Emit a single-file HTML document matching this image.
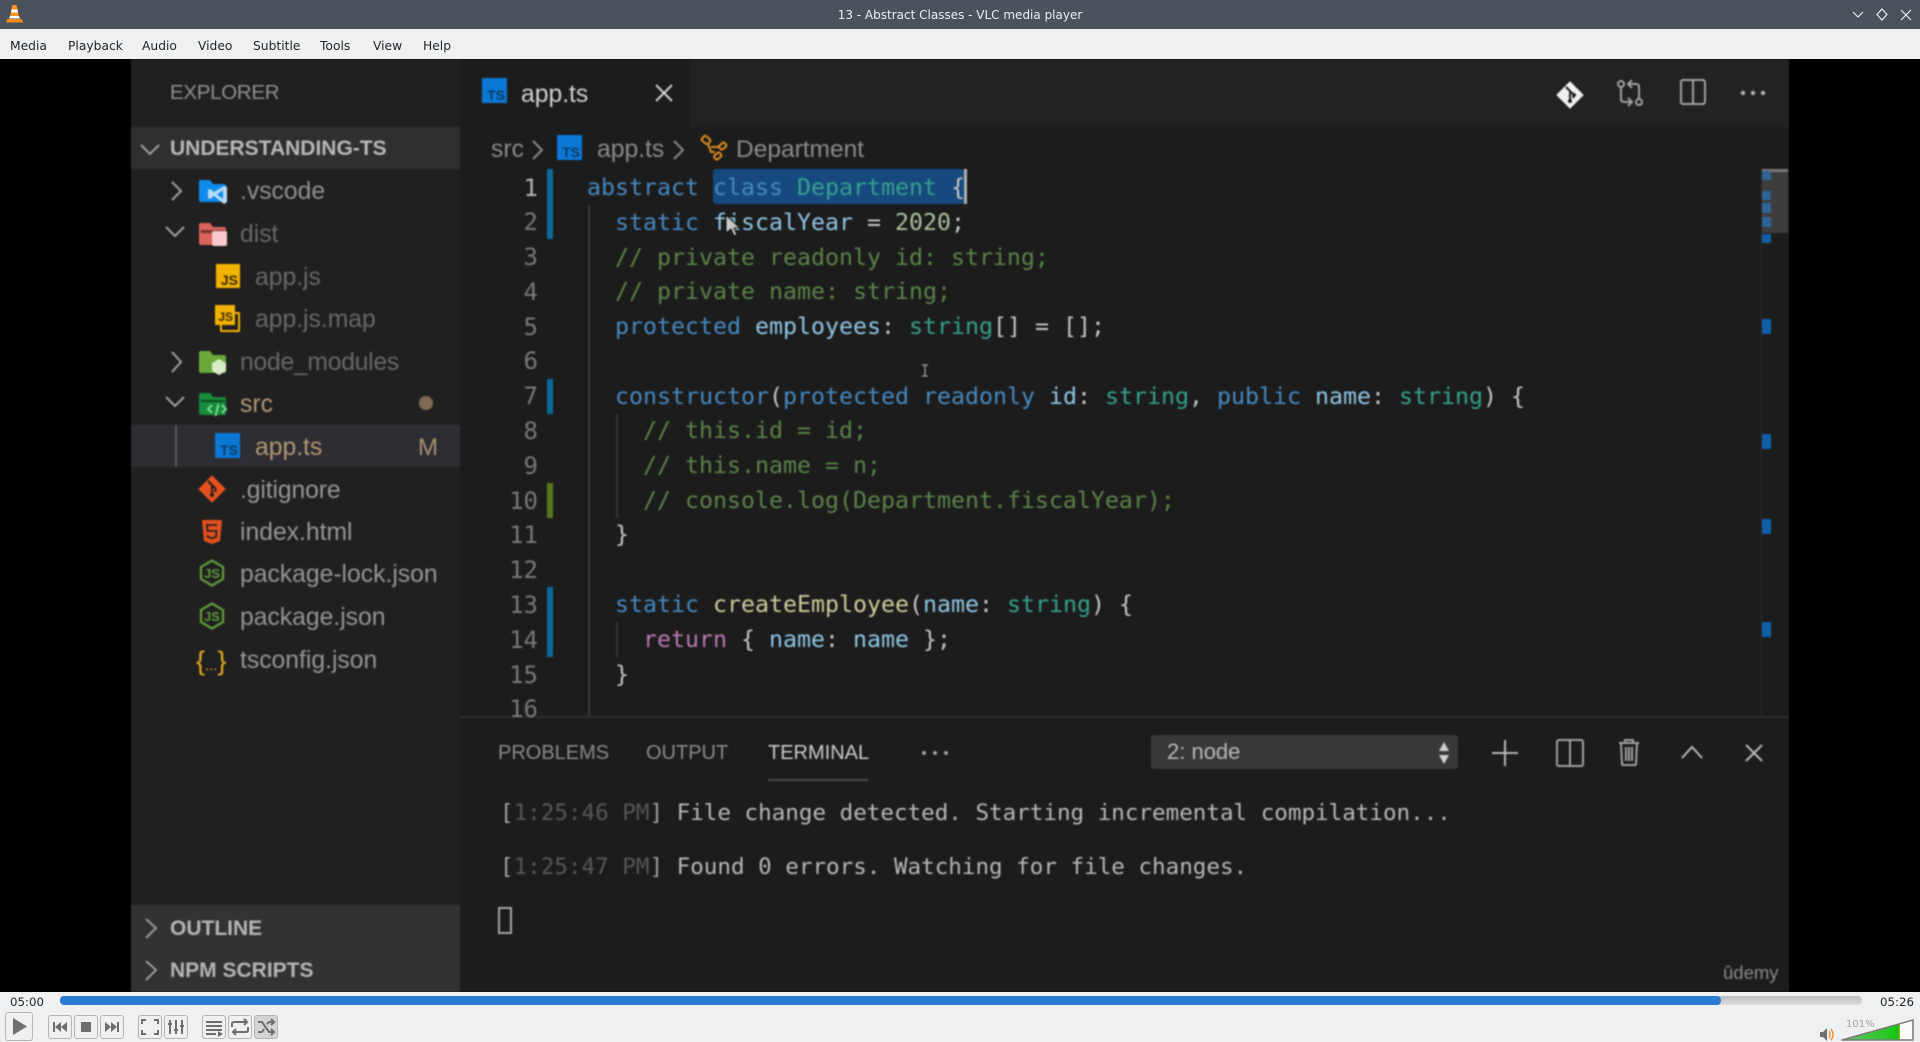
<!DOCTYPE html>
<html><head><meta charset="utf-8"><title>13 - Abstract Classes - VLC media player</title>
<style>
html,body{margin:0;padding:0;width:1920px;height:1042px;overflow:hidden;background:#000}
.a,.f,.l,.n,.t,.m,.b{position:absolute;white-space:pre}
#title{left:0;top:0;width:1920px;height:29px;background:#4a525b}
#menu{left:0;top:29px;width:1920px;height:30px;background:#eff0f1}
.m{top:31px;font:12.3px/30px "DejaVu Sans",sans-serif;color:#232629}
#video{left:0;top:59px;width:1920px;height:933px;background:#000;overflow:hidden}
#v{position:absolute;left:0;top:-59px;width:1920px;height:1042px;filter:blur(.8px)}
.f{font:24.7px/42px "Liberation Sans",sans-serif;height:42px;color:#949494}
.h{font:bold 21px/42px "Liberation Sans",sans-serif;color:#b8b8b8}
.l{left:0;height:35px;line-height:35px;font-family:"DejaVu Sans Mono",monospace;font-size:23.25px;color:#c6c6c6}
.n{left:490px;width:48px;text-align:right;height:35px;line-height:35px;font-family:"DejaVu Sans Mono",monospace;font-size:24px;color:#787878}
.k{color:#4688c0}.y{color:#35a08c}.c{color:#5b8349}.v{color:#8fc6e4}.d{color:#aec39e}.p{color:#b878b0}.w{color:#c6c6c6}.fn{color:#cfcc9c}
.t{font:22.57px/30px "DejaVu Sans Mono",monospace;color:#b8b8b8}.g{color:#565656}.br{color:#a0a0a0}
.pt{font:20px/30px "Liberation Sans",sans-serif;color:#8a8a8a;top:738px}
.ts{position:absolute;background:#0b78d6;color:#0b3a63;font:bold 14px/14px "Liberation Sans",sans-serif}
.ts span{position:absolute;right:2px;bottom:1px}
.bm{position:absolute;left:1762px;width:9px;background:#0f5fa6}
.b{top:1015px;width:24px;height:24px;border:1px solid #b3b5b6;border-radius:3px;box-sizing:border-box;background:#eff0f1}
.b svg{position:absolute;left:0;top:0}
.tm{font:11.8px/16px "DejaVu Sans",sans-serif;color:#232629}
</style></head><body>

<div class="a" id="title">
 <svg class="a" style="left:6px;top:5px" width="17" height="18" viewBox="0 0 17 18"><path d="M6.5 0h4l1.2 4.5h-6.4z" fill="#f7931e"/><path d="M5.6 4.5h5.8l.7 3H4.900z" fill="#fff"/><path d="M4.900 7.5h7.2l.8 3.5H4z" fill="#f7931e"/><path d="M4 11h9l1 2.5H3z" fill="#fff"/><path d="M1 14h15l1 3.5H0z" fill="#f28a12"/></svg>
 <div class="a" style="left:0;top:1px;width:1920px;text-align:center;font:12px/29px 'DejaVu Sans',sans-serif;color:#eceff1">13 - Abstract Classes - VLC media player</div>
 <svg class="a" style="left:1850px;top:6px" width="64" height="18" viewBox="0 0 64 18" fill="none" stroke="#f4f5f6" stroke-width="1.1"><path d="M3 6l5 5 5-5"/><path d="M32 3l5 5.500-5 5.500-5-5.500z"/><path d="M51 4l10 10M61 4l-10 10"/></svg>
</div>
<div class="a" id="menu"></div>
<div class="m" style="left:10px">Media</div><div class="m" style="left:68px">Playback</div><div class="m" style="left:142px">Audio</div><div class="m" style="left:198px">Video</div><div class="m" style="left:253px">Subtitle</div><div class="m" style="left:320px">Tools</div><div class="m" style="left:373px">View</div><div class="m" style="left:423px">Help</div>

<div class="a" id="video"><div id="v">
 <!-- backgrounds -->
 <div class="a" style="left:131px;top:59px;width:329px;height:933px;background:#202020"></div>
 <div class="a" style="left:460px;top:59px;width:1329px;height:933px;background:#1c1c1c"></div>
 <div class="a" style="left:690px;top:59px;width:1099px;height:68px;background:#222"></div>
 <div class="a" style="left:460px;top:59px;width:230px;height:68px;background:#1c1c1c"></div>
 <div class="a" style="left:131px;top:127px;width:329px;height:42px;background:#2f2f2f"></div>
 <div class="a" style="left:131px;top:905px;width:329px;height:87px;background:#323232"></div>
 <div class="a" style="left:131px;top:425px;width:329px;height:42px;background:#2d2d33"></div>
 <div class="a" style="left:175px;top:425px;width:2px;height:42px;background:#55555a"></div>
 <div class="a" style="left:460px;top:716px;width:1329px;height:2px;background:#2e2e2e"></div>

 <!-- sidebar -->
 <div class="f" style="left:170px;top:72px;font-size:20.500px;letter-spacing:-.3px;color:#8f8f8f">EXPLORER</div>
 <div class="f h" style="left:170px;top:128px">UNDERSTANDING-TS</div>
 <svg class="a" style="left:131px;top:130px" width="60" height="340" viewBox="0 0 60 340" fill="none" stroke="#a0a0a0" stroke-width="2"><path d="M10 15l9 9 9-9"/><path d="M41 52l9 9-9 9"/><path d="M35 97l9 9 9-9"/><path d="M41 222l9 10-9 10"/><path d="M35 267l9 9 9-9"/></svg>

 <svg class="a" style="left:198px;top:179px" width="30" height="26" viewBox="0 0 30 26"><path d="M1 3q0-2 2-2h9l3 4h11q2 0 2 2v14q0 2-2 2H3q-2 0-2-2z" fill="#0f8bea"/><path d="M26 7l3 1v15l-3 2-10-8-4 3-2-1v-8l2-1 4 3z" fill="#b5dcfa"/><path d="M25 11v9l-6-4.500z" fill="#0f8bea"/></svg>
 <div class="f" style="left:240px;top:171px;color:#8f8f8f">.vscode</div>

 <svg class="a" style="left:198px;top:222px" width="30" height="26" viewBox="0 0 30 26"><path d="M1 3q0-2 2-2h9l3 4h11q2 0 2 2v14q0 2-2 2H3q-2 0-2-2z" fill="#d9625c"/><path d="M3 8h24v3H3z" fill="#7a3330"/><rect x="14" y="9" width="15" height="15" rx="2" fill="#f8c9cf"/></svg>
 <div class="f" style="left:240px;top:214px;color:#686868">dist</div>

 <div class="ts" style="left:216px;top:264px;width:24px;height:24px;background:#f2b202;color:#3a2a00"><span>JS</span></div>
 <div class="f" style="left:255px;top:257px;color:#686868">app.js</div>

 <div class="a" style="left:220px;top:312px;width:20px;height:20px;border:2px solid #f2b202;box-sizing:border-box;border-radius:1px"></div>
 <div class="ts" style="left:215px;top:305px;width:20px;height:20px;background:#f2b202;color:#3a2a00;font-size:12px"><span>JS</span></div>
 <div class="f" style="left:255px;top:299px;color:#686868">app.js.map</div>

 <svg class="a" style="left:198px;top:350px" width="30" height="26" viewBox="0 0 30 26"><path d="M1 3q0-2 2-2h9l3 4h11q2 0 2 2v14q0 2-2 2H3q-2 0-2-2z" fill="#6aa83a"/><path d="M21 9l7 4v8l-7 4-7-4v-8z" fill="#d9ecc8"/></svg>
 <div class="f" style="left:240px;top:342px;color:#686868;letter-spacing:-.25px">node_modules</div>

 <svg class="a" style="left:198px;top:392px" width="30" height="26" viewBox="0 0 30 26"><path d="M1 3q0-2 2-2h9l3 4h11q2 0 2 2v14q0 2-2 2H3q-2 0-2-2z" fill="#1a8a3c"/><path d="M3 8h24v2H3z" fill="#0d4a20"/><path d="M14 13l-4 4 4 4M24 13l4 4-4 4M20.500 12l-3 12" fill="none" stroke="#7fe59a" stroke-width="1.800"/></svg>
 <div class="f" style="left:240px;top:384px;color:#b29874">src</div>
 <div class="a" style="left:419px;top:396px;width:14px;height:14px;border-radius:50%;background:#7d6b54"></div>

 <div class="ts" style="left:215px;top:433px;width:25px;height:25px"><span>TS</span></div>
 <div class="f" style="left:255px;top:427px;color:#b29874">app.ts</div>
 <div class="f" style="left:418px;top:427px;color:#a8906e;font-size:24px">M</div>

 <svg class="a" style="left:198px;top:475px" width="28" height="28" viewBox="0 0 28 28"><path d="M14 1l13 13-13 13L1 14z" fill="#e8501f" stroke="#e8501f" stroke-linejoin="round" stroke-width="1"/><path d="M10 6l8 8M14 10v9M18 14l-1 3" stroke="#202020" stroke-width="2" fill="none"/><circle cx="14" cy="20" r="2" fill="#202020"/></svg>
 <div class="f" style="left:240px;top:470px;color:#969696;letter-spacing:-.1px">.gitignore</div>

 <svg class="a" style="left:201px;top:519px" width="22" height="26" viewBox="0 0 22 26"><path d="M1 1h20l-2 21-8 3-8-3z" fill="#e4501f"/><path d="M16 6H6l.5 6h9l-.6 6-4 1.300-4-1.300-.2-2" fill="none" stroke="#202020" stroke-width="1.800"/></svg>
 <div class="f" style="left:240px;top:512px;color:#969696">index.html</div>

 <svg class="a" style="left:199px;top:559px" width="26" height="28" viewBox="0 0 26 28"><path d="M13 1.500l11 6.500v12l-11 6.500L2 20V8z" fill="none" stroke="#5e9a3c" stroke-width="2.300"/><text x="13" y="19" text-anchor="middle" font-family="Liberation Sans" font-weight="bold" font-size="13" fill="#5e9a3c">JS</text></svg>
 <div class="f" style="left:240px;top:554px">package-lock.json</div>
 <svg class="a" style="left:199px;top:602px" width="26" height="28" viewBox="0 0 26 28"><path d="M13 1.500l11 6.500v12l-11 6.500L2 20V8z" fill="none" stroke="#5e9a3c" stroke-width="2.300"/><text x="13" y="19" text-anchor="middle" font-family="Liberation Sans" font-weight="bold" font-size="13" fill="#5e9a3c">JS</text></svg>
 <div class="f" style="left:240px;top:597px">package.json</div>

 <div class="f" style="left:196px;top:640px;color:#e2ac1c;font-size:27px;letter-spacing:0">{<span style="font-size:15px">...</span>}</div>
 <div class="f" style="left:240px;top:640px">tsconfig.json</div>

 <svg class="a" style="left:140px;top:915px" width="24" height="70" viewBox="0 0 24 70" fill="none" stroke="#9a9a9a" stroke-width="2"><path d="M6 4l10 9-10 10"/><path d="M6 46l10 9-10 10"/></svg>
 <div class="f h" style="left:170px;top:908px;color:#b5b5b5">OUTLINE</div>
 <div class="f h" style="left:170px;top:950px;color:#b5b5b5">NPM SCRIPTS</div>

 <!-- tab -->
 <div class="ts" style="left:482px;top:78px;width:25px;height:25px"><span>TS</span></div>
 <div class="f" style="left:521px;top:74px;color:#d0d0d0">app.ts</div>
 <svg class="a" style="left:654px;top:83px" width="20" height="20" viewBox="0 0 20 20" stroke="#d0d0d0" stroke-width="2"><path d="M2 2l16 16M18 2L2 18"/></svg>

 <!-- top right icons -->
 <svg class="a" style="left:1556px;top:81px" width="28" height="28" viewBox="0 0 28 28"><path d="M14 1l13 13-13 13L1 14z" fill="#f0f0f0" stroke="#f0f0f0" stroke-linejoin="round"/><path d="M10 6l8 8M14 10v9M18 14l-1 3" stroke="#1f1f1f" stroke-width="2" fill="none"/><circle cx="14" cy="20" r="2" fill="#1f1f1f"/><circle cx="18" cy="14" r="2" fill="#1f1f1f"/></svg>
 <svg class="a" style="left:1616px;top:79px" width="28" height="28" viewBox="0 0 28 28" fill="none" stroke="#a0a0a0" stroke-width="2"><circle cx="5" cy="5" r="3"/><circle cx="23" cy="23" r="3"/><path d="M5 8v12q0 3 3 3h7M12 19l4 4-4 4M23 20V8q0-3-3-3h-7M16 1l-4 4 4 4"/></svg>
 <svg class="a" style="left:1680px;top:79px" width="26" height="26" viewBox="0 0 26 26" fill="none" stroke="#a0a0a0" stroke-width="2"><rect x="1" y="1" width="24" height="24" rx="2"/><path d="M13 1v24"/></svg>
 <svg class="a" style="left:1740px;top:88px" width="26" height="10" viewBox="0 0 26 10" fill="#b0b0b0"><circle cx="3" cy="5" r="2.200"/><circle cx="13" cy="5" r="2.200"/><circle cx="23" cy="5" r="2.200"/></svg>

 <!-- breadcrumbs -->
 <div class="f" style="left:491px;top:129px;color:#8a8a8a">src</div>
 <svg class="a" style="left:530px;top:139px" width="16" height="22" viewBox="0 0 16 22" fill="none" stroke="#8a8a8a" stroke-width="2"><path d="M3 2l9 9-9 9"/></svg>
 <div class="ts" style="left:557px;top:135px;width:25px;height:25px"><span>TS</span></div>
 <div class="f" style="left:597px;top:129px;color:#8a8a8a">app.ts</div>
 <svg class="a" style="left:671px;top:139px" width="16" height="22" viewBox="0 0 16 22" fill="none" stroke="#8a8a8a" stroke-width="2"><path d="M3 2l9 9-9 9"/></svg>
 <svg class="a" style="left:700px;top:134px" width="28" height="28" viewBox="0 0 28 28" fill="none" stroke="#d98a1e" stroke-width="2"><rect x="2" y="3" width="8" height="6" rx="1.500" transform="rotate(40 6 6)"/><rect x="19" y="10" width="7" height="5" rx="1.500" transform="rotate(-40 22 12)"/><rect x="14" y="20" width="7" height="5" rx="1.500" transform="rotate(-40 17 22)"/><path d="M8 10l3 8h4M11 13h9"/></svg>
 <div class="f" style="left:736px;top:129px;color:#8a8a8a;font-size:24.500px">Department</div>

 <!-- gutter -->
 <div class="a" style="left:547px;top:169px;width:6px;height:70px;background:#0c6a96"></div>
 <div class="a" style="left:547px;top:379px;width:6px;height:35px;background:#0c6a96"></div>
 <div class="a" style="left:547px;top:483px;width:6px;height:35px;background:#567a1f"></div>
 <div class="a" style="left:547px;top:587px;width:6px;height:70px;background:#0c6a96"></div>
 <div class="a" style="left:588px;top:205px;width:1.500px;height:511px;background:#3a3a3a"></div>
 <div class="a" style="left:616px;top:414px;width:1.500px;height:104px;background:#333"></div>
 <div class="a" style="left:616px;top:622px;width:1.500px;height:35px;background:#333"></div>

 <!-- selection -->
 <div class="a" style="left:713px;top:169px;width:251px;height:35px;background:#164a7e;border-radius:3px"></div>
 <div class="a" style="left:964px;top:169px;width:3px;height:35px;background:#b0b0b0"></div>

 <!-- line numbers -->
 <div class="n" style="top:171px;color:#b4b4b4">1</div>
 <div class="n" style="top:205px">2</div>
 <div class="n" style="top:240px">3</div>
 <div class="n" style="top:275px">4</div>
 <div class="n" style="top:310px">5</div>
 <div class="n" style="top:344px">6</div>
 <div class="n" style="top:379px">7</div>
 <div class="n" style="top:414px">8</div>
 <div class="n" style="top:449px">9</div>
 <div class="n" style="top:484px">10</div>
 <div class="n" style="top:518px">11</div>
 <div class="n" style="top:553px">12</div>
 <div class="n" style="top:588px">13</div>
 <div class="n" style="top:623px">14</div>
 <div class="n" style="top:658px">15</div>
 <div class="n" style="top:692px">16</div>

 <!-- code -->
 <div class="l" style="left:587px;top:170px"><span class="k">abstract class</span> <span class="y">Department</span> <span class="w">{</span></div>
 <div class="l" style="left:615px;top:205px"><span class="k">static</span> <span class="v">fiscalYear</span> = <span class="d">2020</span>;</div>
 <div class="l c" style="left:615px;top:240px;color:#5b8349">// private readonly id: string;</div>
 <div class="l c" style="left:615px;top:274px;color:#5b8349">// private name: string;</div>
 <div class="l" style="left:615px;top:309px"><span class="k">protected</span> <span class="v">employees</span>: <span class="y">string</span>[] = [];</div>
 <div class="l" style="left:615px;top:379px"><span class="k">constructor</span>(<span class="k">protected</span> <span class="k">readonly</span> <span class="v">id</span>: <span class="y">string</span>, <span class="k">public</span> <span class="v">name</span>: <span class="y">string</span>) {</div>
 <div class="l" style="left:643px;top:413px;color:#5b8349">// this.id = id;</div>
 <div class="l" style="left:643px;top:448px;color:#5b8349">// this.name = n;</div>
 <div class="l" style="left:643px;top:483px;color:#5b8349">// console.log(Department.fiscalYear);</div>
 <div class="l" style="left:615px;top:517px">}</div>
 <div class="l" style="left:615px;top:587px"><span class="k">static</span> <span class="fn">createEmployee</span>(<span class="v">name</span>: <span class="y">string</span>) {</div>
 <div class="l" style="left:643px;top:622px"><span class="p">return</span> { <span class="v">name</span>: <span class="v">name</span> };</div>
 <div class="l" style="left:615px;top:657px">}</div>

 <!-- mouse pointers -->
 <svg class="a" style="left:725px;top:214px" width="16" height="24" viewBox="0 0 16 24"><path d="M1 1v18l5-4 3 7 3-1-3-7h6z" fill="#c8c8c8" stroke="#111" stroke-width="1"/></svg>
 <svg class="a" style="left:921px;top:364px" width="8" height="13" viewBox="0 0 8 13" fill="none" stroke="#bbb" stroke-width="1"><path d="M1 1h6M4 1v11M1 12h6"/></svg>

 <!-- minimap -->
 <div class="a" style="left:1762px;top:169px;width:26px;height:64px;background:#3d3d3d"></div>
 <div class="a" style="left:1762px;top:169px;width:26px;height:3px;background:#777"></div>
 <div class="a" style="left:1761px;top:169px;width:1px;height:547px;background:#2a2a2a"></div>
 <div class="bm" style="top:171px;height:9px;background:#2f6494"></div>
 <div class="bm" style="top:191px;height:9px;background:#2f6494"></div>
 <div class="bm" style="top:203px;height:10px;background:#2f6494"></div>
 <div class="bm" style="top:217px;height:10px;background:#2f6494"></div>
 <div class="bm" style="top:234px;height:9px"></div>
 <div class="bm" style="top:319px;height:15px"></div>
 <div class="bm" style="top:434px;height:15px"></div>
 <div class="bm" style="top:519px;height:15px"></div>
 <div class="bm" style="top:622px;height:15px"></div>

 <!-- panel -->
 <div class="a pt" style="left:498px">PROBLEMS</div>
 <div class="a pt" style="left:646px">OUTPUT</div>
 <div class="a pt" style="left:768px;color:#cbcbcb">TERMINAL</div>
 <div class="a" style="left:768px;top:779px;width:100px;height:2px;background:#4a4a4a"></div>
 <svg class="a" style="left:921px;top:749px" width="28" height="8" viewBox="0 0 28 8" fill="#a0a0a0"><circle cx="3" cy="4" r="2"/><circle cx="14" cy="4" r="2"/><circle cx="25" cy="4" r="2"/></svg>

 <div class="a" style="left:1151px;top:735px;width:307px;height:34px;background:#383838;border-radius:3px"></div>
 <div class="f" style="left:1167px;top:732px;color:#b8b8b8;font-size:22px;line-height:40px">2: node</div>
 <svg class="a" style="left:1438px;top:741px" width="12" height="24" viewBox="0 0 12 24" fill="#cfcfcf"><path d="M6 1l5 9H1zM6 23l-5-9h10z"/></svg>
 <svg class="a" style="left:1491px;top:738px" width="28" height="30" viewBox="0 0 28 30" stroke="#b8b8b8" stroke-width="2"><path d="M14 2v26M1 15h26"/></svg>
 <svg class="a" style="left:1556px;top:739px" width="28" height="28" viewBox="0 0 28 28" fill="none" stroke="#a0a0a0" stroke-width="2"><rect x="1" y="1" width="26" height="26" rx="2"/><path d="M14 1v26"/></svg>
 <svg class="a" style="left:1618px;top:738px" width="22" height="28" viewBox="0 0 22 28" fill="none" stroke="#a0a0a0" stroke-width="2"><path d="M1 5h20M7 5V2h8v3M3 5l1 21q0 1 1 1h12q1 0 1-1l1-21M8 9v14M11 9v14M14 9v14"/></svg>
 <svg class="a" style="left:1680px;top:744px" width="24" height="16" viewBox="0 0 24 16" fill="none" stroke="#b8b8b8" stroke-width="2"><path d="M2 14L12 3l10 11"/></svg>
 <svg class="a" style="left:1744px;top:743px" width="20" height="20" viewBox="0 0 20 20" stroke="#b8b8b8" stroke-width="2"><path d="M2 2l16 16M18 2L2 18"/></svg>

 <!-- terminal -->
 <div class="t" style="left:500px;top:798px"><span class="br">[</span><span class="g">1:25:46 PM</span><span class="br">]</span> File change detected. Starting incremental compilation...</div>
 <div class="t" style="left:500px;top:852px"><span class="br">[</span><span class="g">1:25:47 PM</span><span class="br">]</span> Found 0 errors. Watching for file changes.</div>
 <div class="a" style="left:498px;top:907px;width:14px;height:27px;border:2px solid #a5a5a5;box-sizing:border-box"></div>
 <div class="f" style="left:1723px;top:952px;font-size:18.500px;color:#8a8a8a">ûdemy</div>
</div></div>

<!-- controls -->
<div class="a" style="left:0;top:992px;width:1920px;height:50px;background:#eff0f1"></div>
<div class="a tm" style="left:10px;top:994px">05:00</div>
<div class="a" style="left:60px;top:996px;width:1802px;height:9px;border-radius:4px;background:linear-gradient(#bcbec0,#dcdddf)"></div>
<div class="a" style="left:60px;top:996px;width:1661px;height:9px;border-radius:4px;background:#2b7cd0"></div>
<div class="a tm" style="left:1880px;top:994px">05:26</div>

<div class="b" style="left:5px;top:1012px;width:28px;height:29px"><svg width="26" height="27" viewBox="0 0 26 27"><path d="M7 5l14 8.500L7 22z" fill="#6e6e6e"/></svg></div>
<div class="b" style="left:48px"><svg width="22" height="22" viewBox="0 0 22 22" fill="#6e6e6e"><path d="M4 6h2v10H4zM6 11l6-5v10zM12 11l6-5v10z"/></svg></div>
<div class="b" style="left:74px"><svg width="22" height="22" viewBox="0 0 22 22"><rect x="6" y="6" width="10" height="10" fill="#6e6e6e"/></svg></div>
<div class="b" style="left:100px"><svg width="22" height="22" viewBox="0 0 22 22" fill="#6e6e6e"><path d="M4 6l6 5-6 5zM10 6l6 5-6 5zM16 6h2v10h-2z"/></svg></div>
<div class="b" style="left:138px"><svg width="22" height="22" viewBox="0 0 22 22" fill="none" stroke="#6e6e6e" stroke-width="2"><path d="M3 8V4h4M15 4h4v4M19 14v4h-4M7 18H3v-4"/></svg></div>
<div class="b" style="left:164px"><svg width="22" height="22" viewBox="0 0 22 22" stroke="#6e6e6e" stroke-width="2" fill="#6e6e6e"><path d="M5 4v14M11 4v14M17 4v14"/><path d="M3 8h4M9 14h4M15 10h4"/></svg></div>
<div class="b" style="left:202px"><svg width="22" height="22" viewBox="0 0 22 22" fill="#6e6e6e"><path d="M3 5h16v2H3zM3 9h16v2H3zM3 13h16v2H3zM3 17h10v2H3zM15 15l5 3-5 3z"/></svg></div>
<div class="b" style="left:228px"><svg width="22" height="22" viewBox="0 0 22 22" fill="none" stroke="#6e6e6e" stroke-width="2"><path d="M3 11V8q0-2 2-2h12M15 3l3 3-3 3M19 11v3q0 2-2 2H5M7 13l-3 3 3 3"/></svg></div>
<div class="b" style="left:254px;background:#d3d4d5"><svg width="22" height="22" viewBox="0 0 22 22" fill="none" stroke="#6e6e6e" stroke-width="2"><path d="M3 6h4l7 10h5M3 16h4l2-3M12 8l2-2h5M16 3l3 3-3 3M16 13l3 3-3 3"/></svg></div>

<svg class="a" style="left:1819px;top:1027px" width="16" height="15" viewBox="0 0 16 15"><path d="M1 5h3l4-4v13l-4-4H1z" fill="#6e6e6e"/><path d="M10 4q2 3.500 0 7M12 2q4 5.500 0 11" fill="none" stroke="#f08a1d" stroke-width="1.300"/></svg>
<svg class="a" style="left:1840px;top:1018px" width="75" height="24" viewBox="0 0 75 24"><path d="M2 22L73 2v20z" fill="#fbfbfb"/><defs><linearGradient id="gr" x1="0" x2="1"><stop offset="0" stop-color="#6cc26c"/><stop offset=".85" stop-color="#1fc81f"/><stop offset=".97" stop-color="#18c010"/><stop offset="1" stop-color="#c0b020"/></linearGradient></defs><path d="M2 22L60 5.700V22z" fill="url(#gr)"/><path d="M2 22L73 2v20z" fill="none" stroke="#7a7a7a" stroke-width="1.500" stroke-linejoin="round"/></svg>
<div class="a" style="left:1846px;top:1019px;font:10px/12px 'DejaVu Sans',sans-serif;color:#a3a3a3">101%</div>
</body></html>
